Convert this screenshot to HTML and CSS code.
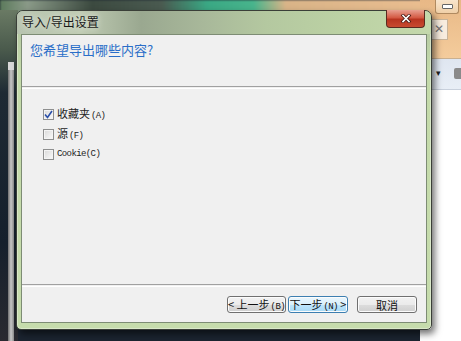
FILE: index.html
```html
<!DOCTYPE html>
<html lang="zh-CN">
<head>
<meta charset="utf-8">
<title>导入/导出设置</title>
<link rel="stylesheet" href="styles.css">
</head>
<body>
<div class="desktop">
  <div class="desk-top"></div>
  <div class="desk-left"><div class="scroll-strip"></div></div>
  <div class="browser">
    <div class="browser-top">
      <div class="min-btn"><span></span></div>
      <div class="tab-close">✕</div>
    </div>
    <div class="browser-toolbar">
      <span class="caret">▾</span>
      <span class="rss"></span>
    </div>
    <div class="browser-page"></div>
  </div>

  <div class="dialog">
    <div class="titlebar">
      <span class="title">导入/导出设置</span>
      <div class="close-btn">
        <svg width="12" height="9" viewBox="0 0 12 9"><path d="M3 1.5 L9 7.5 M9 1.5 L3 7.5" stroke="#4a1a14" stroke-width="3.2" stroke-linecap="square"/><path d="M3 1.5 L9 7.5 M9 1.5 L3 7.5" stroke="#fff" stroke-width="1.6" stroke-linecap="square"/></svg>
      </div>
    </div>
    <div class="client">
      <div class="header">您希望导出哪些内容?</div>
      <div class="sep"></div>
      <div class="content">
        <label class="row"><span class="cb checked"><svg width="9" height="9" viewBox="0 0 9 9"><path d="M1 4.5 L3.5 7.5 L8 1" fill="none" stroke="#2a4fa8" stroke-width="1.6"/></svg></span><span class="lbl">收藏夹<span class="mono">(A)</span></span></label>
        <label class="row"><span class="cb"></span><span class="lbl">源<span class="mono">(F)</span></span></label>
        <label class="row"><span class="cb"></span><span class="lbl mono">Cookie(C)</span></label>
      </div>
      <div class="sep"></div>
      <div class="footer">
        <button class="btn back">&lt; 上一步<span class="mono">(B)</span></button>
        <button class="btn next">下一步<span class="mono">(N)</span> &gt;</button>
        <button class="btn cancel">取消</button>
      </div>
    </div>
  </div>
</div>
</body>
</html>
```

FILE: styles.css
```css
html, body {
  margin: 0;
  padding: 0;
}
body {
  width: 461px;
  height: 341px;
  overflow: hidden;
  font-family: "Noto Sans CJK SC", "Liberation Sans", sans-serif;
  font-size: 12px;
  color: #000;
}
.desktop {
  position: relative;
  width: 461px;
  height: 341px;
  background: #1b2430;
  overflow: hidden;
}
.desk-top {
  position: absolute;
  left: 0;
  top: 0;
  width: 461px;
  height: 14px;
  background: linear-gradient(to right, #5c7a5c 0%, #8a9a88 6%, #3c4a40 20%, #4a5a50 35%, #3aa884 45%, #48b48c 55%, #d9b488 62%, #eec092 100%);
  filter: blur(1px);
}
.desk-left {
  position: absolute;
  left: 0;
  top: 10px;
  width: 18px;
  height: 331px;
  background: linear-gradient(to bottom, #6a7a64 0%, #4a5a4c 12%, #1e2a34 25%, #15202c 70%, #2a2a30 100%);
}
.scroll-strip {
  position: absolute;
  left: 8px;
  top: 52px;
  width: 6px;
  height: 279px;
  background: linear-gradient(to right, #6e6e6e, #c8c8c8 50%, #8a8a8a);
  border-top: 8px solid #d8d8d8;
}
.browser {
  position: absolute;
  left: 420px;
  top: 0;
  width: 41px;
  height: 341px;
  display: flex;
  flex-direction: column;
}
.browser-top {
  position: relative;
  height: 58px;
  background: linear-gradient(to bottom, #e8b886, #f4cc9c);
}
.min-btn {
  position: absolute;
  left: 15px;
  top: 0;
  width: 22px;
  height: 13px;
  border: 1px solid #b08a60;
  border-top: none;
  border-radius: 0 0 3px 3px;
  background: linear-gradient(#f8e4cc, #f0d0a8);
}
.min-btn span {
  position: absolute;
  left: 6px;
  top: 4px;
  width: 9px;
  height: 3px;
  background: #fff;
  border: 1px solid #666;
  border-radius: 1px;
}
.tab-close {
  position: absolute;
  left: 10px;
  top: 19px;
  width: 16px;
  height: 19px;
  background: #f8ecde;
  border: 1px solid #c8b49a;
  color: #777;
  font-family: "DejaVu Sans", sans-serif;
  font-size: 12px;
  line-height: 19px;
  text-align: center;
}
.browser-toolbar {
  position: relative;
  height: 30px;
  background: linear-gradient(#dfe6f0, #e8eef6);
  border-top: 1px solid #c9b090;
  border-bottom: 1px solid #c8d0dc;
}
.caret {
  position: absolute;
  left: 16px;
  top: 9px;
  font-size: 9px;
  color: #222;
  font-family: "DejaVu Sans", sans-serif;
}
.rss {
  position: absolute;
  left: 34px;
  top: 9px;
  width: 10px;
  height: 11px;
  background: #8a8a8a;
  border-radius: 2px;
}
.browser-page {
  flex: 1;
  background: #fff;
}

/* dialog window */
.dialog {
  position: absolute;
  left: 16px;
  top: 10px;
  width: 414px;
  height: 318px;
  border: 1px solid #3a3f38;
  border-radius: 7px 7px 5px 5px;
  background: linear-gradient(to bottom, #a8b898 0px, #b8cca4 24px, #c4daaa 60px, #c6dcac 100%);
  box-shadow: 3px 4px 7px rgba(0,0,0,0.55), 0 0 0 1px rgba(255,255,255,0.35) inset;
  display: flex;
  flex-direction: column;
}
.titlebar {
  position: relative;
  height: 23px;
  flex: none;
  border-radius: 6px 6px 0 0;
  background: linear-gradient(to right, #b8c4b0 0%, #c0ccb4 15%, #9aa890 30%, #a8b89a 45%, #b4c8a0 60%, #bcd2a4 80%, #c4d8ac 100%);
}
.title {
  position: absolute;
  left: 5px;
  top: 4px;
  font-size: 12px;
  line-height: 14px;
  color: #1a1a1a;
  text-shadow: 0 0 6px rgba(255,255,255,0.8);
}
.close-btn {
  position: absolute;
  right: 6px;
  top: -1px;
  width: 37px;
  height: 17px;
  border: 1px solid #5a2a20;
  border-top: none;
  border-radius: 0 0 4px 4px;
  background: linear-gradient(to bottom, #e8a090 0%, #d45a44 45%, #b83420 55%, #c84a30 100%);
  display: flex;
  align-items: center;
  justify-content: center;
}
.client {
  flex: 1;
  margin: 0 4px 6px 4px;
  background: #f0f0f0;
  border: 1px solid #7d8c74;
  display: flex;
  flex-direction: column;
}
.header {
  height: 51px;
  padding: 6px 0 0 8px;
  box-sizing: border-box;
  font-size: 13px;
  line-height: 17px;
  color: #2a6ec8;
}
.sep {
  height: 1px;
  border-top: 1px solid #a0a0a0;
  border-bottom: 1px solid #ffffff;
}
.content {
  flex: 1;
  padding: 19px 0 0 21px;
  display: flex;
  flex-direction: column;
  gap: 8px;
}
.row {
  display: flex;
  align-items: center;
  height: 12px;
  gap: 3px;
  font-size: 11px;
  color: #222;
}
.cb {
  width: 11px;
  height: 11px;
  box-sizing: border-box;
  border: 1px solid #8e8f8f;
  background: linear-gradient(135deg, #d8d8d8, #fbfbfb);
  box-shadow: inset 0 0 0 1px #f4f4f4;
  display: flex;
  align-items: center;
  justify-content: center;
}
.cb svg {
  display: block;
}
.lbl {
  line-height: 12px;
  white-space: nowrap;
}
.mono {
  font-family: "Liberation Mono", "DejaVu Sans Mono", monospace;
  font-size: 9px;
  letter-spacing: -0.6px;
  margin-left: 1px;
}
.lbl.mono {
  margin-left: 0;
}
.footer {
  height: 35px;
  box-sizing: border-box;
  padding: 9px 9px 0 0;
  display: flex;
  justify-content: flex-end;
  align-items: flex-start;
}
.btn {
  height: 17px;
  padding: 0;
  box-sizing: border-box;
  border: 1px solid #707070;
  border-radius: 3px;
  background: linear-gradient(to bottom, #f2f2f2 0%, #ebebeb 50%, #dddddd 51%, #cfcfcf 100%);
  box-shadow: inset 0 0 0 1px #fcfcfc;
  font-family: "Noto Sans CJK SC", sans-serif;
  font-size: 11px;
  line-height: 14px;
  color: #111;
  white-space: nowrap;
}
.back {
  width: 59px;
}
.next {
  width: 60px;
  margin-left: 2px;
  border-color: #3c7fb1;
  background: linear-gradient(to bottom, #eaf6fd 0%, #d9f0fc 50%, #bee6fd 51%, #a7d9f5 100%);
}
.cancel {
  width: 60px;
  margin-left: 9px;
}
```
